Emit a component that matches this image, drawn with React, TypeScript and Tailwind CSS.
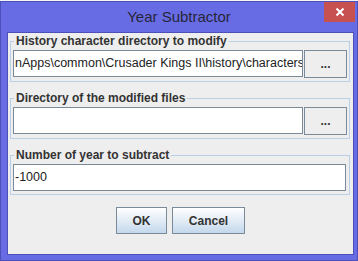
import React from "react";

const font = { fontFamily: '"Liberation Sans", Arial, sans-serif' };

function Group({ title, children, className = "" }: { title: string; children: React.ReactNode; className?: string }) {
  return (
    <fieldset className={`border border-[#b8cfe5] px-[2px] pt-[2px] pb-[2px] ${className}`}>
      <legend className="ml-[1px] px-[2px] text-[12px] font-bold leading-[14px] text-[#333333]">{title}</legend>
      {children}
    </fieldset>
  );
}

function TextField({ value, className = "" }: { value: string; className?: string }) {
  return (
    <div className={`h-[27px] border border-[#7a8a99] bg-white pl-[1px] flex items-center overflow-hidden whitespace-nowrap text-[12.5px] text-[#222] ${className}`}>
      {value}
    </div>
  );
}

function DotsButton() {
  return (
    <div className="ml-[1px] h-[28px] w-[43px] border border-[#7a8a99] bg-[#eeeeee] flex items-center justify-center text-[12px] font-bold text-[#333] leading-none">
      ...
    </div>
  );
}

export default function App() {
  return (
    <div className="w-[358px] h-[261px] bg-[#f4f4f4] overflow-hidden" style={font}>
      <div className="mt-[1px] h-[260px] bg-[#686ce4] border border-[#4d50b8] flex flex-col">
        <div className="h-[30px] flex items-start relative">
          <div className="flex-1 text-center text-[15px] leading-[16px] pt-[7px] text-[#26263a]">Year Subtractor</div>
          <div className="absolute right-[2px] top-0 w-[31px] h-[20px] bg-[#c75050] flex items-center justify-center">
            <svg width="10" height="10" viewBox="0 0 10 10">
              <path d="M1.5 1.5 L8.5 8.5 M8.5 1.5 L1.5 8.5" stroke="white" strokeWidth="2" />
            </svg>
          </div>
        </div>
        <div className="ml-[6px] mr-[3px] h-[223px] border border-[#4d50b8] bg-[#eeeeee] flex flex-col px-[2px] pt-[1px]">
          <Group title="History character directory to modify" className="mr-[1px]">
            <div className="flex items-start pb-[1px]">
              <TextField value={"nApps\\common\\Crusader Kings II\\history\\characters"} className="w-[290px]" />
              <DotsButton />
            </div>
          </Group>
          <Group title="Directory of the modified files" className="mt-[9px] mr-[1px]">
            <div className="flex items-start pb-[1px]">
              <TextField value="" className="w-[290px]" />
              <DotsButton />
            </div>
          </Group>
          <Group title="Number of year to subtract" className="mt-[9px] mr-[1px]">
            <div className="pr-[1px] pb-[1px]">
              <TextField value="-1000" />
            </div>
          </Group>
          <div className="mt-[12px] flex justify-center gap-[5px]">
            <div className="h-[27px] w-[51px] border border-[#7a8a99] bg-gradient-to-b from-white to-[#c4d8ec] flex items-center justify-center text-[12px] font-bold text-[#333]">OK</div>
            <div className="h-[27px] w-[73px] border border-[#7a8a99] bg-gradient-to-b from-white to-[#c4d8ec] flex items-center justify-center text-[12px] font-bold text-[#333]">Cancel</div>
          </div>
        </div>
      </div>
    </div>
  );
}
